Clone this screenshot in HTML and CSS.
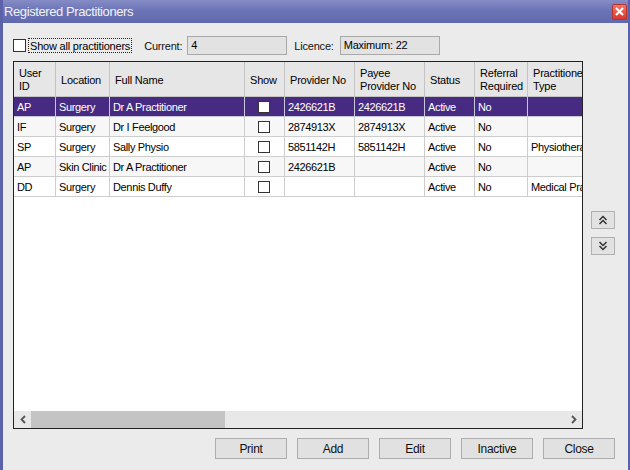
FILE: index.html
```html
<!DOCTYPE html>
<html lang="en">
<head>
  <meta charset="UTF-8">
  <title>Registered Practitioners</title>
  <link rel="stylesheet" href="styles.css">
</head>
<body>

<div class="window">
  <div class="titlebar">
    <span class="title">Registered Practitioners</span>
    <span class="close">
      <svg width="9" height="9" viewBox="0 0 9 9"><path d="M1 1 L8 8 M8 1 L1 8" stroke="#fff" stroke-width="2.2"/></svg>
    </span>
  </div>

  <div class="content">
    <div class="toolbar">
      <span class="check"></span>
      <span class="focus">Show all practitioners</span>
      <span class="label lbl-current">Current:</span>
      <span class="field">4</span>
      <span class="label lbl-licence">Licence:</span>
      <span class="field field-max">Maximum: 22</span>
    </div>

    <div class="main">
      <div class="grid">
        <div class="grid-body">
          <table>
            <colgroup>
              <col class="w-id"><col class="w-loc"><col class="w-name"><col class="w-show">
              <col class="w-prov"><col class="w-payee"><col class="w-status"><col class="w-ref"><col class="w-type">
            </colgroup>
            <thead>
              <tr>
                <th>User<br>ID</th>
                <th>Location</th>
                <th>Full Name</th>
                <th>Show</th>
                <th>Provider No</th>
                <th>Payee<br>Provider No</th>
                <th>Status</th>
                <th>Referral<br>Required</th>
                <th>Practitioner<br>Type</th>
              </tr>
            </thead>
            <tbody>
              <tr class="selected">
                <td>AP</td><td>Surgery</td><td>Dr A Practitioner</td><td class="show"><span class="box"></span></td>
                <td>2426621B</td><td>2426621B</td><td>Active</td><td>No</td><td></td>
              </tr>
              <tr class="alt">
                <td>IF</td><td>Surgery</td><td>Dr I Feelgood</td><td class="show"><span class="box"></span></td>
                <td>2874913X</td><td>2874913X</td><td>Active</td><td>No</td><td></td>
              </tr>
              <tr>
                <td>SP</td><td>Surgery</td><td>Sally Physio</td><td class="show"><span class="box"></span></td>
                <td>5851142H</td><td>5851142H</td><td>Active</td><td>No</td><td>Physiotherapist</td>
              </tr>
              <tr class="alt">
                <td>AP</td><td>Skin Clinic</td><td>Dr A Practitioner</td><td class="show"><span class="box"></span></td>
                <td>2426621B</td><td></td><td>Active</td><td>No</td><td></td>
              </tr>
              <tr>
                <td>DD</td><td>Surgery</td><td>Dennis Duffy</td><td class="show"><span class="box"></span></td>
                <td></td><td></td><td>Active</td><td>No</td><td>Medical Practitioner</td>
              </tr>
            </tbody>
          </table>
        </div>
        <div class="hscroll">
          <span class="arrow">
            <svg width="6" height="9" viewBox="0 0 6 9"><path d="M5 1 L1.5 4.5 L5 8" fill="none" stroke="#555" stroke-width="1.8"/></svg>
          </span>
          <span class="thumb"></span>
          <span class="track"></span>
          <span class="arrow">
            <svg width="6" height="9" viewBox="0 0 6 9"><path d="M1 1 L4.5 4.5 L1 8" fill="none" stroke="#555" stroke-width="1.8"/></svg>
          </span>
        </div>
      </div>

      <div class="side">
        <span class="sbtn">
          <svg width="10" height="10" viewBox="0 0 10 10"><path d="M1.5 5 L5 1.5 L8.5 5 M1.5 9 L5 5.5 L8.5 9" fill="none" stroke="#333" stroke-width="1.5"/></svg>
        </span>
        <span class="sbtn">
          <svg width="10" height="10" viewBox="0 0 10 10"><path d="M1.5 1 L5 4.5 L8.5 1 M1.5 5 L5 8.5 L8.5 5" fill="none" stroke="#333" stroke-width="1.5"/></svg>
        </span>
      </div>
    </div>

    <div class="actions">
      <button>Print</button>
      <button>Add</button>
      <button>Edit</button>
      <button>Inactive</button>
      <button>Close</button>
    </div>
  </div>
</div>

</body>
</html>
```

FILE: styles.css
```css
body {
  margin: 0;
  font-family: "Liberation Sans", Arial, sans-serif;
  font-size: 11px;
  letter-spacing: -0.2px;
  background: #ebebeb;
  color: #000;
}
.window {
  width: 630px;
  height: 470px;
  box-sizing: border-box;
  border-left: 3px solid #5b62a9;
  border-right: 2px solid #5b62a9;
  display: flex;
  flex-direction: column;
  background: #ebebeb;
  overflow: hidden;
}
.titlebar {
  height: 23px;
  flex: none;
  display: flex;
  align-items: center;
  background: linear-gradient(#858cc6, #6d74b6 45%, #6168ad);
  color: #f2f3fa;
  padding-left: 1px;
}
.title {
  font-size: 13px;
  letter-spacing: -0.4px;
}
.close {
  margin-left: auto;
  margin-right: 1px;
  width: 15px;
  height: 16px;
  box-sizing: border-box;
  border: 1px solid #b8332b;
  border-radius: 2px;
  background: linear-gradient(#f0766b, #d8392f);
  display: flex;
  align-items: center;
  justify-content: center;
}
.content {
  flex: 1;
  padding: 13px 13px 0 10px;
  display: flex;
  flex-direction: column;
}
.toolbar {
  display: flex;
  align-items: center;
  height: 19px;
}
.check {
  width: 13px;
  height: 13px;
  box-sizing: border-box;
  border: 1px solid #333;
  background: #fff;
}
.focus {
  margin-left: 2px;
  height: 15px;
  line-height: 14px;
  box-sizing: border-box;
  padding: 0 1px;
  border: 1px dotted #222;
}
.label {
  color: #111;
}
.lbl-current {
  margin-left: 12px;
}
.lbl-licence {
  margin-left: 7px;
}
.field {
  width: 100px;
  height: 19px;
  box-sizing: border-box;
  border: 1px solid #a9a9a9;
  background: #e2e2e2;
  line-height: 17px;
  padding-left: 3px;
  margin-left: 5px;
}
.field-max {
  margin-left: 6px;
}
.main {
  display: flex;
  height: 368px;
  margin-top: 6px;
}
.grid {
  width: 570px;
  box-sizing: border-box;
  border: 1px solid #222;
  background: #fff;
  display: flex;
  flex-direction: column;
}
.grid-body {
  flex: 1;
  overflow: hidden;
}
table {
  border-collapse: separate;
  border-spacing: 0;
  table-layout: fixed;
  width: 625px;
}
col.w-id { width: 42px; }
col.w-loc { width: 54px; }
col.w-name { width: 135px; }
col.w-show { width: 40px; }
col.w-prov { width: 70px; }
col.w-payee { width: 70px; }
col.w-status { width: 50px; }
col.w-ref { width: 53px; }
col.w-type { width: 111px; }
th {
  height: 35px;
  box-sizing: border-box;
  background: #e6e6e6;
  border-right: 1px solid #c4c4c4;
  border-bottom: 1px solid #c4c4c4;
  font-weight: normal;
  text-align: left;
  padding: 2px 0 0 5px;
  line-height: 13px;
  white-space: nowrap;
  overflow: hidden;
}
td {
  height: 20px;
  box-sizing: border-box;
  border-right: 1px solid #cdcdcd;
  border-bottom: 1px solid #cdcdcd;
  padding: 1px 0 0 3px;
  letter-spacing: -0.35px;
  white-space: nowrap;
  overflow: hidden;
}
tr.alt td {
  background: #f7f7f7;
}
tr.selected td {
  background: #472a82;
  color: #fff;
  border-color: #c8c8d8;
}
td.show {
  text-align: center;
  padding: 0 1px 0 0;
}
.box {
  display: inline-block;
  vertical-align: middle;
  width: 12px;
  height: 12px;
  box-sizing: border-box;
  border: 1px solid #333;
  background: #fff;
}
.hscroll {
  height: 17px;
  flex: none;
  display: flex;
  background: #e8e8e8;
}
.arrow {
  width: 17px;
  display: flex;
  align-items: center;
  justify-content: center;
}
.thumb {
  width: 194px;
  background: #c4c4c4;
}
.track {
  flex: 1;
}
.side {
  margin-left: 8px;
  padding-top: 150px;
  display: flex;
  flex-direction: column;
  gap: 8px;
}
.sbtn {
  width: 24px;
  height: 18px;
  box-sizing: border-box;
  border: 1px solid #b0b0b0;
  background: #e2e2e2;
  display: flex;
  align-items: center;
  justify-content: center;
}
.actions {
  display: flex;
  justify-content: flex-end;
  gap: 10px;
  margin-top: 9px;
}
button {
  width: 72px;
  height: 21px;
  border: 1px solid #adadad;
  background: #e1e1e1;
  font-family: "Liberation Sans", Arial, sans-serif;
  font-size: 12px;
  letter-spacing: -0.3px;
  color: #111;
  padding: 0;
}
```
